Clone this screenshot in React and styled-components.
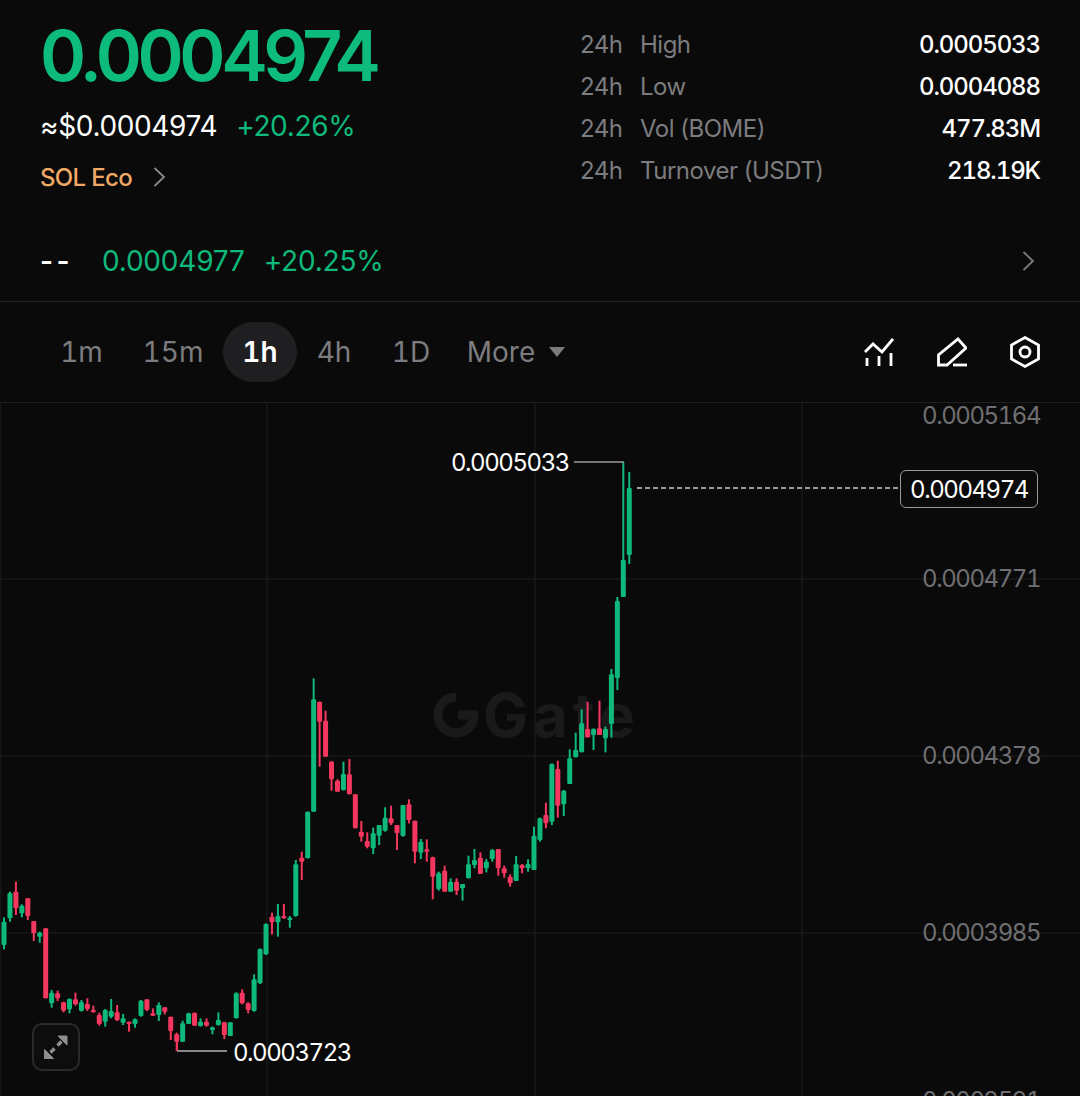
import React from 'react';
import styled, { createGlobalStyle } from 'styled-components';

const GREEN = '#0fb97c';
const RED = '#f4375f';
const GRID = '#18181a';

const GlobalStyle = createGlobalStyle`
  html, body { margin: 0; padding: 0; background: #0a0a0a; }
  body { font-family: Inter, "Liberation Sans", sans-serif; }
`;

const Page = styled.div`
  width: 1080px;
  height: 1096px;
  overflow: hidden;
  background: #0a0a0a;
  color: #fff;
  display: flex;
  flex-direction: column;
`;

const Header = styled.header`
  height: 231px;
  padding: 0 40px;
  display: flex;
  justify-content: space-between;
`;

const PriceCol = styled.div`
  display: flex;
  flex-direction: column;
  align-items: flex-start;
`;

const BigPrice = styled.div`
  margin-top: 14px;
  height: 84px;
  line-height: 84px;
  font-size: 70px;
  font-weight: 600;
  letter-spacing: -4.4px;
  color: #0dbb7d;
`;

const SubRow = styled.div`
  margin-top: 7px;
  height: 42px;
  display: flex;
  align-items: center;
  gap: 19px;
  font-size: 28px;
  letter-spacing: -0.35px;
`;

const Change = styled.span`
  color: ${GREEN};
`;

const FuturesChange = styled(Change)`
  margin-left: 19px;
`;

const TagRow = styled.div`
  margin-top: 13px;
  height: 34px;
  display: flex;
  align-items: center;
  gap: 15px;
  font-size: 24px;
  font-weight: 500;
  letter-spacing: -0.65px;
  color: #f0a866;
`;

const Stats = styled.div`
  width: 460px;
  padding-top: 23px;
  display: flex;
  flex-direction: column;
`;

const StatRow = styled.div`
  height: 42px;
  display: flex;
  align-items: center;
  font-size: 24px;
  letter-spacing: -0.5px;
  color: #7c7c7f;
`;

const StatPeriod = styled.span`
  width: 60px;
`;

const StatValue = styled.span`
  margin-left: auto;
  color: #fff;
  font-weight: 500;
  font-variant-numeric: tabular-nums;
  letter-spacing: -1.1px;
`;

const FuturesRow = styled.div`
  height: 71px;
  padding: 0 40px 10px;
  display: flex;
  align-items: center;
  font-size: 28px;
  letter-spacing: -0.2px;
  color: ${GREEN};
  border-bottom: 1px solid #222224;
  box-sizing: border-box;
`;

const Dashes = styled.span`
  width: 62px;
  color: #fff;
  font-weight: 600;
  letter-spacing: 3.5px;
`;

const FuturesChevron = styled.span`
  margin-left: auto;
  display: flex;
`;

const Toolbar = styled.nav`
  height: 101px;
  padding: 0 40px;
  display: flex;
  align-items: center;
  border-bottom: 1px solid #1e1e20;
  box-sizing: border-box;
`;

const Tab = styled.button`
  height: 60px;
  min-width: ${p => p.$w}px;
  padding: 0;
  border: 0;
  border-radius: 30px;
  font-family: inherit;
  font-size: 28px;
  font-variant-numeric: tabular-nums;
  font-weight: ${p => (p.$active ? 600 : 400)};
  color: ${p => (p.$active ? '#fff' : '#7c7c7f')};
  background: ${p => (p.$active ? '#1f1f21' : 'transparent')};
  display: flex;
  align-items: center;
  justify-content: center;
  gap: 14px;
`;

const ToolIcons = styled.div`
  margin-left: auto;
  display: flex;
  align-items: center;
  gap: 43px;
`;

const Chart = styled.section`
  position: relative;
  flex: 1;
`;

const ChartSvg = styled.svg`
  display: block;
  width: 1080px;
  height: 693px;
`;

const Watermark = styled.text`
  font-family: Inter, "Liberation Sans", sans-serif;
  font-size: 60px;
  font-weight: 700;
  fill: #1a1a1b;
  letter-spacing: 5px;
`;

const AxisLabel = styled.span`
  position: absolute;
  right: 40px;
  top: ${p => p.$top - 403 - 14}px;
  line-height: 30px;
  font-size: 24px;
  font-variant-numeric: tabular-nums;
  letter-spacing: -1.45px;
  color: #6f6f72;
`;

const Callout = styled.span`
  position: absolute;
  left: ${p => p.$left}px;
  top: ${p => p.$top - 403 - 14}px;
  line-height: 30px;
  font-size: 24px;
  font-variant-numeric: tabular-nums;
  letter-spacing: -1.45px;
  color: #fff;
`;

const PriceTag = styled.span`
  position: absolute;
  left: 900px;
  top: 67px;
  width: 138px;
  height: 38px;
  box-sizing: border-box;
  border: 1.5px solid #9a9a9c;
  border-radius: 6px;
  background: #0a0a0a;
  font-size: 24px;
  font-variant-numeric: tabular-nums;
  letter-spacing: -1.45px;
  display: flex;
  align-items: center;
  justify-content: center;
`;

const ExpandButton = styled.button`
  position: absolute;
  left: 32px;
  top: 620px;
  width: 48px;
  height: 48px;
  padding: 0;
  background: #0d0d0e;
  border: 2px solid #2a2a2b;
  border-radius: 10px;
  display: flex;
  align-items: center;
  justify-content: center;
`;

// [wickTop, wickBottom, bodyTop, bodyBottom, red?] measured on the 3x crops
const LEFT_CANDLES = [
  [232, 328, 245, 315], [155, 245, 160, 235], [125, 225, 155, 205, 1], [193, 232, 197, 220],
  [175, 240, 175, 228, 1], [243, 303, 243, 280, 1], [275, 308, 278, 290], [265, 475, 265, 475, 1],
  [450, 503, 458, 490], [452, 483, 460, 475, 1], [485, 517, 487, 512, 1], [475, 520, 477, 508],
  [458, 497, 478, 493, 1], [480, 515, 487, 512], [475, 513, 492, 507, 1], [497, 518, 510, 517, 1],
  [518, 557, 525, 552, 1], [507, 560, 510, 545], [477, 535, 513, 530], [495, 543, 517, 541, 1],
  [522, 555, 535, 548], [545, 575, 545, 552, 1], [535, 563, 538, 552], [480, 530, 482, 528],
  [478, 513, 478, 510, 1], [505, 528, 520, 527, 1], [487, 543, 495, 525], [502, 523, 502, 515, 1],
  [530, 600, 530, 573, 1], [578, 633, 583, 605, 1], [542, 605, 550, 605], [518, 552, 520, 552],
  [518, 557, 518, 557, 1], [535, 560, 545, 558], [535, 560, 545, 557, 1], [560, 583, 562, 570],
  [517, 557, 540, 555], [545, 597, 547, 585, 1], [547, 588, 547, 588], [457, 535, 460, 535],
  [448, 493, 458, 490, 1], [487, 520, 490, 510, 1], [403, 515, 418, 513], [325, 432, 327, 430],
  [250, 345, 252, 343], [218, 283, 230, 247, 1], [192, 290, 228, 247], [192, 237, 228, 235, 1],
  [228, 263, 233, 240], [60, 230, 73, 228],
];

const RIGHT_CANDLES = [
  [575, 660, 593, 605, 1], [455, 595, 455, 595], [55, 455, 118, 455], [125, 320, 125, 185, 1],
  [152, 290, 182, 290, 1], [303, 392, 305, 358, 1], [358, 395, 362, 395, 1], [305, 392, 342, 390],
  [297, 403, 343, 403, 1], [403, 505, 403, 505, 1], [483, 545, 515, 530, 1], [517, 565, 543, 560, 1],
  [503, 582, 520, 565], [495, 555, 495, 527], [442, 515, 473, 512], [437, 495, 475, 490, 1],
  [495, 570, 495, 520, 1], [435, 530, 435, 528], [418, 490, 433, 480, 1], [482, 610, 482, 575, 1],
  [537, 597, 545, 578], [538, 605, 568, 575, 1], [590, 718, 592, 650, 1], [635, 692, 640, 687],
  [617, 695, 632, 695, 1], [655, 695, 665, 695], [655, 705, 665, 692, 1], [672, 722, 672, 685],
  [587, 655, 613, 655], [567, 625, 600, 615], [577, 642, 593, 642, 1], [597, 637, 605, 625],
  [567, 605, 570, 597], [567, 647, 567, 625, 1], [617, 653, 625, 640, 1], [643, 680, 650, 670, 1],
  [588, 663, 613, 663], [612, 640, 615, 625, 1], [598, 635, 612, 625], [500, 630, 527, 630],
  [473, 545, 475, 540], [428, 505, 465, 490, 1], [310, 495, 312, 485], [302, 473, 327, 437, 1],
  [390, 468, 392, 433], [268, 372, 295, 372], [218, 292, 270, 292], [148, 277, 190, 277],
  [125, 232, 207, 232, 1], [205, 270, 207, 225], [122, 225, 205, 225, 1], [200, 277, 207, 235],
  [27, 233, 43, 192],
];

// last three climb out of the second crop, so they are given in page pixels
const TOP_CANDLES = [
  [597, 690, 601, 678], [462, 560, 560, 597], [472, 564, 488, 555],
];

const candles = [
  ...LEFT_CANDLES.map(c => [840 + c[0] / 3, 840 + c[1] / 3, 840 + c[2] / 3, 840 + c[3] / 3, c[4]]),
  ...RIGHT_CANDLES.map(c => [660 + c[0] / 3, 660 + c[1] / 3, 660 + c[2] / 3, 660 + c[3] / 3, c[4]]),
  ...TOP_CANDLES,
];

const Candle = ({ index, data }) => {
  const [wt, wb, bt, bb, red] = data;
  const x = 4 + index * 5.955;
  const fill = red ? RED : GREEN;
  return (
    <g fill={fill}>
      <rect x={x - 1} y={wt} width={2} height={wb - wt} />
      <rect x={x - 2.5} y={bt} width={5} height={bb - bt} rx={1} />
    </g>
  );
};

const Chevron = ({ color = '#8a8a8d' }) => (
  <svg width="24" height="24" viewBox="0 0 24 24" fill="none" stroke={color} strokeWidth="1.8">
    <path d="M7.5 3 L17 12 L7.5 21" />
  </svg>
);

const IndicatorIcon = () => (
  <svg width="30" height="30" viewBox="0 0 30 30" fill="none" stroke="#fff" strokeWidth="2.8">
    <path d="M1 15 L9 7 L18 15 L29 2" />
    <path d="M3 21 V29 M15 19 V29 M27 16 V29" />
  </svg>
);

const DrawIcon = () => (
  <svg width="30" height="30" viewBox="0 0 30 30" fill="none" stroke="#fff" strokeWidth="2.8">
    <path d="M1.5 28 V18 L21 2 L29 11 L10 28 Z" />
    <path d="M16 28 H30" />
  </svg>
);

const SettingsIcon = () => (
  <svg width="30" height="32" viewBox="0 0 30 32" fill="none" stroke="#fff" strokeWidth="2.8">
    <path d="M15 1.5 L28.5 9 V23 L15 30.5 L1.5 23 V9 Z" />
    <circle cx="15" cy="16" r="5" />
  </svg>
);

const App = () => (
  <Page>
    <GlobalStyle />
    <Header>
      <PriceCol>
        <BigPrice>0.0004974</BigPrice>
        <SubRow>
          <span>≈$0.0004974</span>
          <Change>+20.26%</Change>
        </SubRow>
        <TagRow>
          <span>SOL Eco</span>
          <Chevron />
        </TagRow>
      </PriceCol>
      <Stats>
        {[
          ['High', '0.0005033'],
          ['Low', '0.0004088'],
          ['Vol (BOME)', '477.83M'],
          ['Turnover (USDT)', '218.19K'],
        ].map(([label, value]) => (
          <StatRow key={label}>
            <StatPeriod>24h</StatPeriod>
            <span>{label}</span>
            <StatValue>{value}</StatValue>
          </StatRow>
        ))}
      </Stats>
    </Header>

    <FuturesRow>
      <Dashes>--</Dashes>
      <span>0.0004977</span>
      <FuturesChange>+20.25%</FuturesChange>
      <FuturesChevron>
        <Chevron color="#7c7c7f" />
      </FuturesChevron>
    </FuturesRow>

    <Toolbar>
      <Tab $w={83}>1m</Tab>
      <Tab $w={100}>15m</Tab>
      <Tab $w={74} $active>1h</Tab>
      <Tab $w={74}>4h</Tab>
      <Tab $w={80}>1D</Tab>
      <Tab $w={130}>
        More
        <svg width="16" height="12" viewBox="0 0 16 12"><path d="M0 1 H16 L8 11 Z" fill="#7c7c7f" /></svg>
      </Tab>
      <ToolIcons>
        <IndicatorIcon />
        <DrawIcon />
        <SettingsIcon />
      </ToolIcons>
    </Toolbar>

    <Chart>
      <ChartSvg viewBox="0 403 1080 693">
        {[579, 756, 933].map(y => (
          <line key={y} x1="0" x2="1080" y1={y} y2={y} stroke={GRID} strokeWidth="1.5" />
        ))}
        {[0.5, 267, 535, 802].map(x => (
          <line key={x} x1={x} x2={x} y1="403" y2="1096" stroke={GRID} strokeWidth="1.5" />
        ))}

        <path
          d="M456 697 A18 18 0 1 0 474 715 H458"
          stroke="#1a1a1b"
          strokeWidth="9"
          fill="none"
        />
        <Watermark x="483" y="737">Gate</Watermark>

        {candles.map((c, i) => (
          <Candle key={i} index={i} data={c} />
        ))}

        <path d="M574 462 H624" stroke="#9a9a9c" strokeWidth="1.5" fill="none" />
        <path d="M177 1051 H227" stroke="#b5b5b7" strokeWidth="1.5" fill="none" />
        <path d="M177 1040 V1051" stroke={RED} strokeWidth="2" fill="none" />
        <path d="M637 488 H900" stroke="#d0d0d2" strokeWidth="1.4" strokeDasharray="5 3" fill="none" />
      </ChartSvg>

      <AxisLabel $top={415}>0.0005164</AxisLabel>
      <AxisLabel $top={578}>0.0004771</AxisLabel>
      <AxisLabel $top={755}>0.0004378</AxisLabel>
      <AxisLabel $top={932}>0.0003985</AxisLabel>
      <AxisLabel $top={1100}>0.0003591</AxisLabel>

      <Callout $left={451} $top={462}>0.0005033</Callout>
      <Callout $left={233} $top={1052}>0.0003723</Callout>
      <PriceTag>0.0004974</PriceTag>

      <ExpandButton>
        <svg width="26" height="26" viewBox="0 0 26 26" fill="#8e8e90" stroke="#8e8e90">
          <path d="M15 2 H24 V11 Z M1.5 24.5 V15.5 L10.5 24.5 Z" strokeWidth="1" />
          <path d="M18.5 7.5 L14.5 11.5 M7.5 18.5 L11.5 14.5" strokeWidth="3.4" />
        </svg>
      </ExpandButton>
    </Chart>
  </Page>
);

export default App;
